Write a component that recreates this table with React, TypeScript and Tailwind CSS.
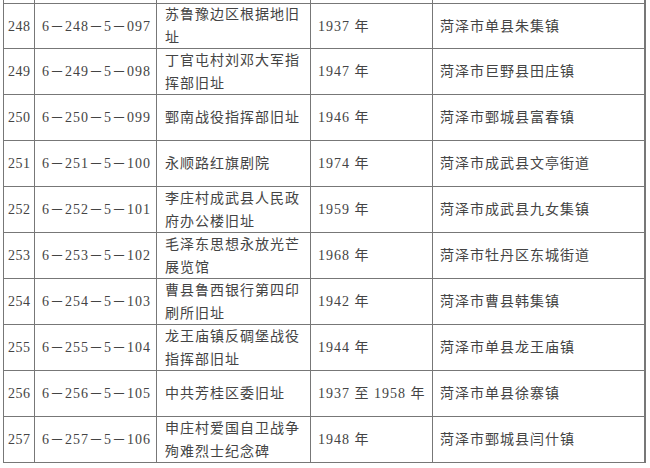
import React from "react";

type Row = { no: string; code: string; name: string[]; year: string; place: string };

const rows: Row[] = [
  { no: "248", code: "6－248－5－097", name: ["苏鲁豫边区根据地旧", "址"], year: "1937 年", place: "菏泽市单县朱集镇" },
  { no: "249", code: "6－249－5－098", name: ["丁官屯村刘邓大军指", "挥部旧址"], year: "1947 年", place: "菏泽市巨野县田庄镇" },
  { no: "250", code: "6－250－5－099", name: ["鄄南战役指挥部旧址"], year: "1946 年", place: "菏泽市鄄城县富春镇" },
  { no: "251", code: "6－251－5－100", name: ["永顺路红旗剧院"], year: "1974 年", place: "菏泽市成武县文亭街道" },
  { no: "252", code: "6－252－5－101", name: ["李庄村成武县人民政", "府办公楼旧址"], year: "1959 年", place: "菏泽市成武县九女集镇" },
  { no: "253", code: "6－253－5－102", name: ["毛泽东思想永放光芒", "展览馆"], year: "1968 年", place: "菏泽市牡丹区东城街道" },
  { no: "254", code: "6－254－5－103", name: ["曹县鲁西银行第四印", "刷所旧址"], year: "1942 年", place: "菏泽市曹县韩集镇" },
  { no: "255", code: "6－255－5－104", name: ["龙王庙镇反碉堡战役", "指挥部旧址"], year: "1944 年", place: "菏泽市单县龙王庙镇" },
  { no: "256", code: "6－256－5－105", name: ["中共芳桂区委旧址"], year: "1937 至 1958 年", place: "菏泽市单县徐寨镇" },
  { no: "257", code: "6－257－5－106", name: ["申庄村爱国自卫战争", "殉难烈士纪念碑"], year: "1948 年", place: "菏泽市鄄城县闫什镇" },
];

const font = { fontFamily: '"Liberation Serif", "Noto Sans CJK SC", serif' };

export default function App() {
  return (
    <div className="w-[650px] h-[468px] bg-white overflow-hidden" style={font}>
      <div className="ml-[3px] w-[643px] border-l border-r-2 border-[#777777] text-[14px] tracking-[1px] text-[#444444]">
        <div className="flex h-[4px] border-b border-[#777777]">
          <div className="w-[31px] border-r border-[#777777]" />
          <div className="w-[122px] border-r border-[#777777]" />
          <div className="w-[154px] border-r border-[#777777]" />
          <div className="w-[122px] border-r border-[#777777]" />
          <div className="flex-1" />
        </div>
        {rows.map((r, i) => (
          <div
            key={r.no}
            className={`flex border-b border-[#777777] ${i === 0 ? "h-[45px]" : "h-[46px]"}`}
          >
            <div className="w-[31px] shrink-0 border-r border-[#777777] flex items-center pl-[4px] tracking-[0.5px]">
              {r.no}
            </div>
            <div className="w-[122px] shrink-0 border-r border-[#777777] flex items-center pl-[7px] whitespace-nowrap">
              {r.code}
            </div>
            <div className="w-[154px] shrink-0 border-r border-[#777777] flex flex-col justify-center pl-[8px] leading-[23px] whitespace-nowrap">
              {r.name.map((n) => (
                <div key={n}>{n}</div>
              ))}
            </div>
            <div className="w-[122px] shrink-0 border-r border-[#777777] flex items-center pl-[7px] whitespace-nowrap">
              {r.year}
            </div>
            <div className="flex-1 flex items-center pl-[7px] whitespace-nowrap">{r.place}</div>
          </div>
        ))}
      </div>
    </div>
  );
}
